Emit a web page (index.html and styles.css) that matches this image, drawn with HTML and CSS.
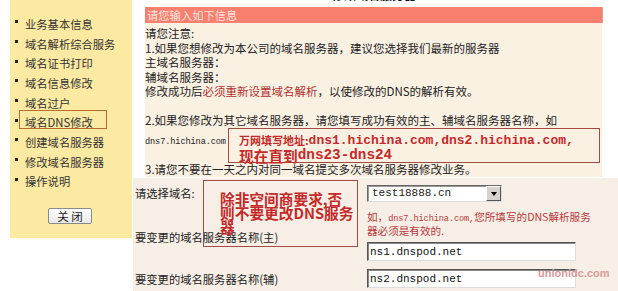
FILE: index.html
```html
<!DOCTYPE html>
<html lang="zh-CN">
<head>
<meta charset="UTF-8">
<meta name="viewport" content="width=device-width, initial-scale=1.0">
<title>域名DNS修改</title>
<link rel="stylesheet" href="styles.css">
</head>
<body>

<div class="page">
  <div class="sidebar">
    <ul class="menu">
      <li><span class="dot"></span>业务基本信息</li>
      <li><span class="dot"></span>域名解析综合服务</li>
      <li><span class="dot"></span>域名证书打印</li>
      <li><span class="dot"></span>域名信息修改</li>
      <li><span class="dot"></span>域名过户</li>
      <li><span class="dot"></span>域名DNS修改</li>
      <li><span class="dot"></span>创建域名服务器</li>
      <li><span class="dot"></span>修改域名服务器</li>
      <li><span class="dot"></span>操作说明</li>
    </ul>
    <div class="close-row"><button class="close-btn">关 闭</button></div>
  </div>

  <div class="main">
    <h2 class="title">修改域名服务器</h2>
    <div class="bar">请您输入如下信息</div>
    <div class="notes">
      <div class="line">请您注意:</div>
      <div class="line">1.如果您想修改为本公司的域名服务器，建议您选择我们最新的服务器</div>
      <div class="line">主域名服务器：</div>
      <div class="line">辅域名服务器：</div>
      <div class="line">修改成功后<span class="red">必须重新设置域名解析</span>，以使修改的DNS的解析有效。</div>
      <div class="line">&nbsp;</div>
      <div class="line">2.如果您修改为其它域名服务器，请您填写成功有效的主、辅域名服务器名称，如</div>
      <div class="line line-dns"><span class="mono-sm">dns7.hichina.com</span></div>
      <div class="line">&nbsp;</div>
      <div class="line">3.请您不要在一天之内对同一域名提交多次域名服务器修改业务。</div>
    </div>

    <div class="form">
      <div class="label">请选择域名:</div>
      <div class="field field-first">
        <div class="select">
          <span class="select-text">test18888.cn</span>
          <span class="select-btn"><span class="arrow"></span></span>
        </div>
      </div>

      <div class="label">要变更的域名服务器名称(主)</div>
      <div class="field">
        <div class="hint">如，<span class="mono-sm">dns7.hichina.com,</span>您所填写的DNS解析服务<br>器必须是有效的.</div>
        <input class="text-input" type="text" value="ns1.dnspod.net">
      </div>

      <div class="label">要变更的域名服务器名称(辅)</div>
      <div class="field">
        <input class="text-input" type="text" value="ns2.dnspod.net">
      </div>

      <div class="label">备注:</div>
      <div class="field"></div>
    </div>
  </div>

  <!-- annotations drawn over the screenshot -->
  <div class="mark-menu"></div>
  <div class="note-box note-dns">
    <div class="note-line"><span class="cn-sm">万网填写地址:</span><span class="mono-a">dns1.hichina.com,dns2.hichina.com,</span></div>
    <div class="note-line"><span class="cn-lg">现在直到</span><span class="mono-b">dns23-dns24</span></div>
  </div>
  <div class="note-box note-warn">除非空间商要求,否<br>则不要更改DNS服务<br>器</div>
  <div class="watermark">unionidc.com</div>
</div>

</body>
</html>
```

FILE: styles.css
```css
body {
  margin: 0;
  background-color: #fff;
  font-family: "Noto Sans CJK SC", "Liberation Sans", sans-serif;
  color: #222;
}
.page {
  position: relative;
  display: flex;
  align-items: flex-start;
  width: 618px;
  height: 291px;
  overflow: hidden;
}

/* left menu */
.sidebar {
  margin-left: 10px;
  width: 122px;
  height: 238px;
  background-color: #fce9a2;
  flex-shrink: 0;
}
.menu {
  list-style: none;
  margin: 0;
  padding: 14px 0 0 5px;
}
.menu li {
  display: flex;
  align-items: center;
  height: 19.7px;
  font-size: 11.3px;
  color: #333;
}
.dot {
  display: inline-block;
  width: 3px;
  height: 3px;
  background-color: #222;
  margin: 0 7px 4px 0;
}
.close-row {
  display: flex;
  justify-content: center;
  margin-top: 17px;
  padding-right: 2px;
}
.close-btn {
  width: 44px;
  height: 16px;
  padding: 0;
  font-family: "Noto Sans CJK SC", sans-serif;
  font-size: 11.5px;
  line-height: 14px;
  color: #222;
  background: linear-gradient(#fff, #e8e8e8);
  border: 1px solid #8a8a8a;
  border-radius: 2px;
}

/* right content */
.main {
  margin-left: 1px;
  flex: 1;
}
.title {
  margin: -11px 15px 0 12px;
  height: 18px;
  font-size: 12px;
  line-height: 12px;
  text-align: center;
  color: #111;
}
.bar {
  margin: 0 15px 0 12px;
  height: 16px;
  padding-left: 2px;
  background-color: #f9806f;
  border-right: 1px solid #d7a399;
  color: #fde0dc;
  font-size: 11.3px;
  line-height: 16px;
}
.notes {
  margin: 0 16px 0 12px;
  height: 151px;
  padding-top: 3px;
  background-color: #fbf1e3;
  font-size: 11.5px;
}
.line {
  height: 14.5px;
  line-height: 14.5px;
  white-space: nowrap;
}
.line-dns {
  margin-top: 4px;
  margin-bottom: 1px;
}
.red {
  color: #b03030;
}
.mono-sm {
  font-family: "Liberation Mono", monospace;
  font-size: 8.6px;
  letter-spacing: -0.1px;
}

.form {
  display: grid;
  grid-template-columns: 234px 1fr;
  margin-top: 1px;
  background-color: #f7efe6;
  font-size: 11.3px;
}
.label {
  display: flex;
  align-items: center;
  padding-left: 2px;
  white-space: nowrap;
}
.field {
  padding: 4px 0;
}
.field-first {
  padding: 7px 0 6px;
}
.select {
  display: flex;
  width: 135px;
  height: 17px;
  box-sizing: border-box;
  background-color: #fff;
  border: 1px solid;
  border-color: #666 #ddd #ddd #666;
  box-shadow: inset 1px 1px #999;
}
.select-text {
  flex: 1;
  padding-left: 4px;
  font-family: "Liberation Mono", monospace;
  font-size: 11px;
  line-height: 15px;
}
.select-btn {
  display: flex;
  align-items: center;
  justify-content: center;
  width: 15px;
  background-color: #d6d3ce;
  border: 1px solid;
  border-color: #fff #555 #555 #fff;
  box-sizing: border-box;
}
.arrow {
  width: 0;
  height: 0;
  border-left: 3px solid transparent;
  border-right: 3px solid transparent;
  border-top: 4px solid #000;
}
.hint {
  color: #b8383a;
  font-size: 10.6px;
  line-height: 12px;
  margin: -1px 0 5px;
  white-space: nowrap;
}
.text-input {
  display: block;
  width: 209px;
  height: 19px;
  box-sizing: border-box;
  margin: 0;
  padding: 0 2px;
  font-family: "Liberation Mono", monospace;
  font-size: 11px;
  color: #111;
  background-color: #fff;
  border: 1px solid;
  border-color: #555 #ddd #ddd #555;
  box-shadow: inset 1px 1px #888;
}

/* annotations */
.mark-menu {
  position: absolute;
  left: 19px;
  top: 110px;
  width: 86px;
  height: 17px;
  border: 1px solid #bb6a30;
}
.note-box {
  position: absolute;
  border: 1px solid #a24a44;
  color: #c42a2a;
  font-weight: bold;
  white-space: nowrap;
}
.note-dns {
  left: 228px;
  top: 128px;
  width: 360px;
  height: 29px;
  padding: 4px 0 0 10px;
}
.note-line {
  display: flex;
  align-items: center;
  height: 15px;
  line-height: 15px;
}
.cn-sm {
  font-size: 11px;
}
.cn-lg {
  font-size: 14.7px;
}
.mono-a {
  font-family: "Liberation Mono", monospace;
  font-size: 13px;
}
.mono-b {
  font-family: "Liberation Mono", monospace;
  font-size: 14.3px;
}
.note-warn {
  left: 203px;
  top: 180px;
  width: 137px;
  height: 54px;
  padding: 11px 0 0 16px;
  font-size: 14.7px;
  line-height: 14px;
}
.watermark {
  position: absolute;
  left: 538px;
  top: 267px;
  font-family: "Liberation Sans", sans-serif;
  font-size: 11px;
  font-weight: bold;
  color: #d79a9a;
}
```
